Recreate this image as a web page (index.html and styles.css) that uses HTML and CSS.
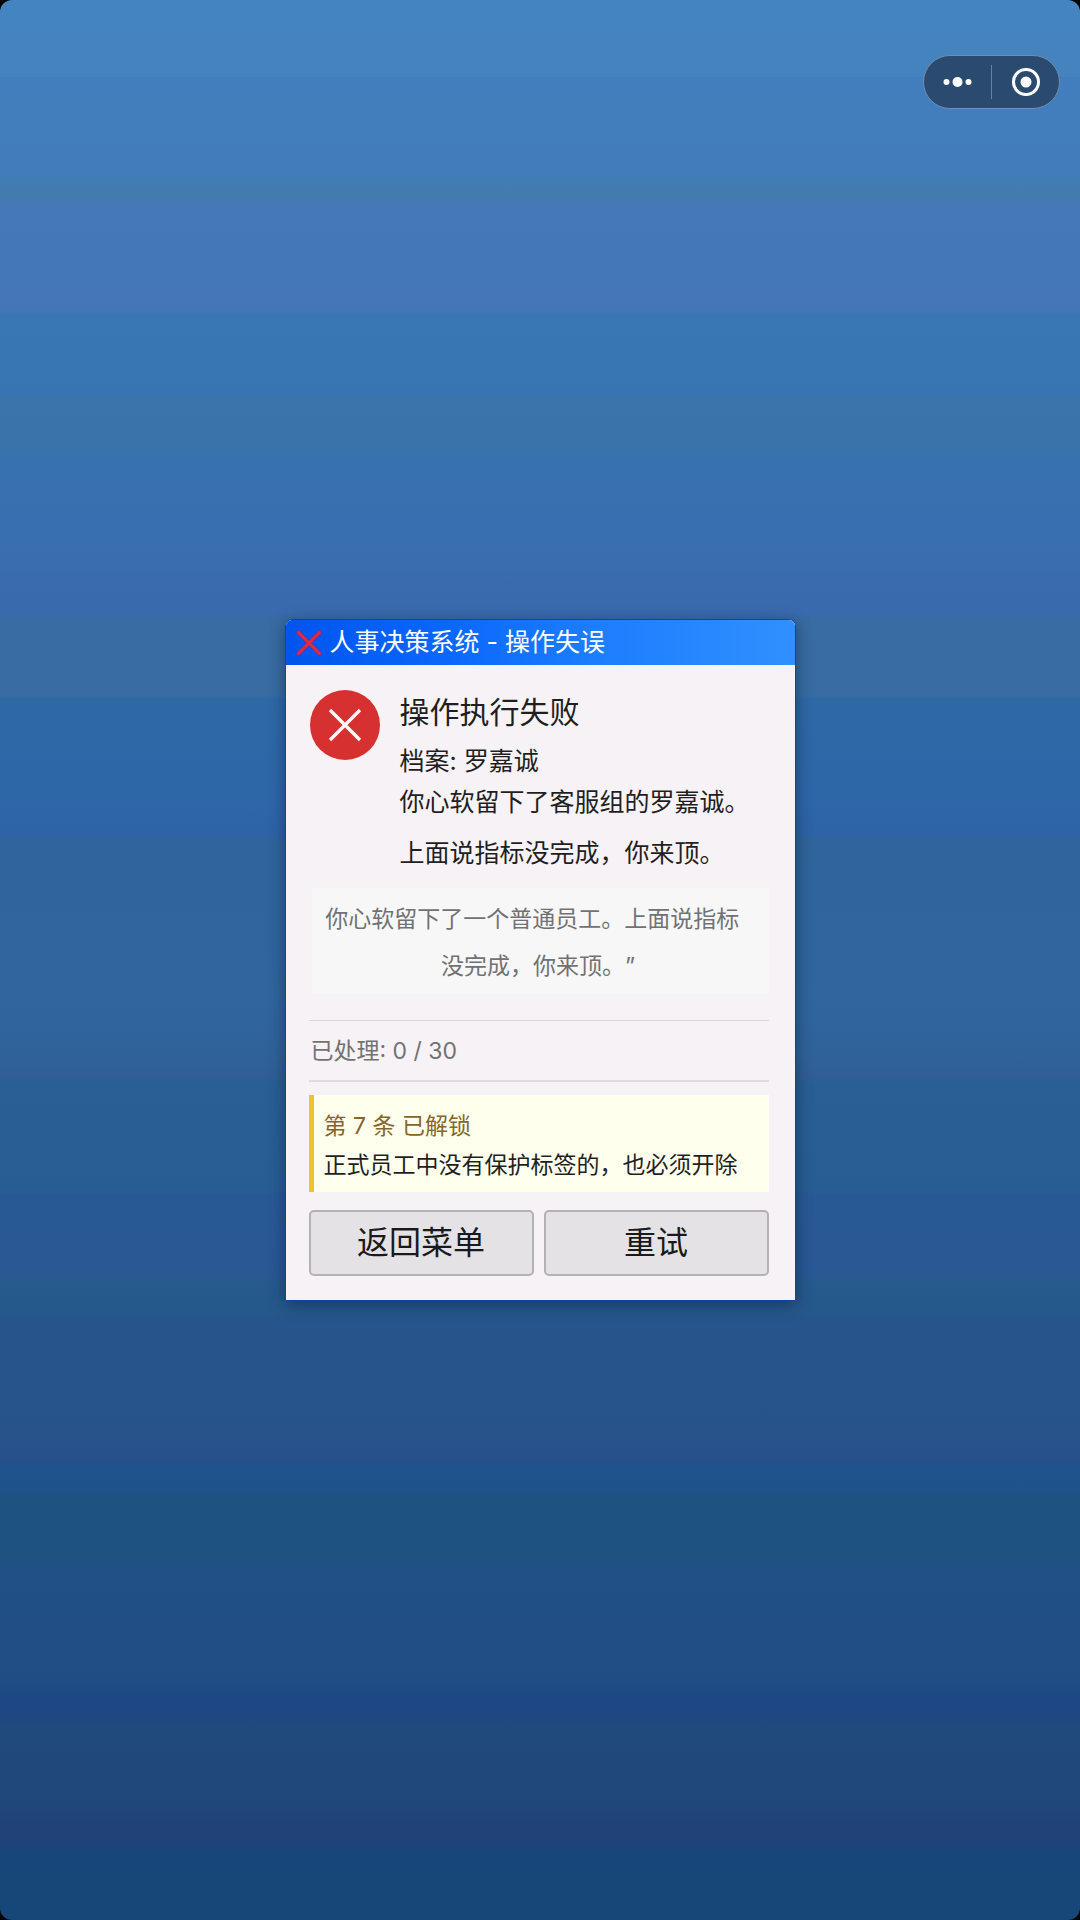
FILE: index.html
```html
<!DOCTYPE html>
<html lang="zh-CN">
<head>
<meta charset="utf-8">
<meta name="viewport" content="width=device-width, initial-scale=1">
<title>人事决策系统</title>
<link rel="stylesheet" href="styles.css">
</head>
<body>
<div class="desktop">
  <div class="capsule">
    <button class="capsule-button" type="button" aria-label="更多">
      <svg width="30" height="30" viewBox="0 0 30 30" fill="#fff"><circle cx="3.500" cy="15" r="3"/><circle cx="14.500" cy="15" r="5"/><circle cx="25.500" cy="15" r="3"/></svg>
    </button>
    <span class="capsule-divider"></span>
    <button class="capsule-button" type="button" aria-label="关闭">
      <svg width="30" height="30" viewBox="0 0 30 30"><circle cx="15" cy="15" r="12.5" fill="none" stroke="#fff" stroke-width="3"/><circle cx="15" cy="15" r="5.5" fill="#fff"/></svg>
    </button>
  </div>

  <main class="dialog" role="alertdialog" aria-labelledby="dialog-title">
    <header class="titlebar">
      <svg class="titlebar-icon" width="26" height="26" viewBox="0 0 26 26" fill="none" stroke-linecap="round"><path d="M2.5 2.5 23.5 23.5M23.5 2.5 2.5 23.5" stroke="#7a2a8c" stroke-width="4.5"/><path d="M2.5 2.5 23.5 23.5M23.5 2.5 2.5 23.5" stroke="#dd2c44" stroke-width="3"/></svg>
      <h1 class="titlebar-text" id="dialog-title">人事决策系统 - 操作失误</h1>
    </header>
    <div class="content">
      <section class="message">
        <svg class="message-icon" width="70" height="70" viewBox="0 0 70 70"><circle cx="35" cy="35" r="35" fill="#d63031"/><path d="M20 20 50 50M50 20 20 50" stroke="#fff" stroke-width="3.200"/></svg>
        <div class="message-text">
          <h2 class="message-title">操作执行失败</h2>
          <p class="line">档案: 罗嘉诚</p>
          <p class="line">你心软留下了客服组的罗嘉诚。</p>
          <p class="line line-spaced">上面说指标没完成，你来顶。</p>
        </div>
      </section>
      <blockquote class="quote">你心软留下了一个普通员工。上面说指标&ensp;<br>没完成，你来顶。”</blockquote>
      <p class="progress">已处理: 0 / 30</p>
      <section class="rule">
        <h3 class="rule-title">第 7 条 已解锁</h3>
        <p class="rule-text">正式员工中没有保护标签的，也必须开除</p>
      </section>
      <div class="actions">
        <button class="action" type="button">返回菜单</button>
        <button class="action" type="button">重试</button>
      </div>
    </div>
  </main>
</div>
</body>
</html>
```
FILE: styles.css
```css
* {
  box-sizing: border-box;
  margin: 0;
  padding: 0;
}

body {
  background: #000;
  font-family: Inter, "Noto Sans CJK SC", sans-serif;
  font-weight: 400;
  color: #1f1f22;
  text-spacing-trim: space-all;
}

h1, h2, h3, button {
  font: inherit;
}

.desktop {
  position: relative;
  display: flex;
  align-items: center;
  justify-content: center;
  min-height: 100vh;
  border-radius: 12px;
  background: linear-gradient(
    #4484c0 0%, #4483be 4%,
    #427ebd 4%, #427cbb 9%,
    #427cb2 9.500%, #427bb0 10.400%,
    #4478b7 10.600%, #4476b5 16.200%,
    #3876b4 16.400%, #3874b2 20.400%,
    #3a74aa 20.800%, #3a73a9 23.200%,
    #3871b0 24%, #386eb0 29.500%,
    #3a6bae 30.200%, #3a6aae 32%,
    #386ca2 32.200%, #386ca2 36.200%,
    #2e69a6 36.400%, #2e66a8 42%,
    #2d63a7 43.400%, #2f659c 43.800%,
    #30659e 52%, #2f6299 55%,
    #305e94 56.200%, #285f94 56.400%,
    #285d93 62%, #295995 62.200%,
    #295894 66.200%, #265a8c 67%,
    #26598b 68.400%, #26558b 68.700%,
    #27538a 75%, #284f8a 76.100%,
    #1e538d 76.300%, #1e528a 77.700%,
    #1e5381 78%, #1e5281 81.300%,
    #205086 81.700%, #204d84 87.500%,
    #1e4885 88.300%, #1e4784 89.200%,
    #20497c 90%, #20477a 94%,
    #204279 95%, #204279 96%,
    #17467a 96.400%, #174678 100%
  );
}

.capsule {
  position: absolute;
  top: 55px;
  right: 20px;
  display: flex;
  align-items: center;
  width: 137px;
  height: 54px;
  border: 1px solid #6f8fb3;
  border-radius: 27px;
  background: #2a4a70;
}

.capsule-button {
  display: flex;
  flex: 1;
  align-items: center;
  justify-content: center;
  height: 100%;
  border: 0;
  background: none;
}

.capsule-divider {
  width: 1px;
  height: 34px;
  background: #6a82a0;
}

.dialog {
  width: 511px;
  max-width: 94%;
  overflow: hidden;
  border: 1px solid #0a45a8;
  border-radius: 7px 7px 0 0;
  background: #f7f2f6;
  box-shadow: 0 4px 16px rgba(0, 20, 50, 0.45);
}

.titlebar {
  display: flex;
  align-items: center;
  gap: 8px;
  height: 45px;
  padding-left: 10px;
  background: linear-gradient(90deg, #0055ee 0%, #0a66fc 30%, #1c7dff 60%, #3090ff 100%);
  color: #fff;
}

.titlebar-text {
  font-size: 25px;
  line-height: 42px;
  padding-bottom: 2px;
}

.content {
  padding: 25px 26px 24px 23px;
}

.message {
  display: flex;
  align-items: flex-start;
  gap: 20px;
  padding-left: 1px;
}

.message-icon {
  flex: none;
}

.message-title {
  margin-bottom: 7px;
  font-size: 30px;
  line-height: 44px;
}

.line {
  font-size: 25px;
  line-height: 41px;
}

.line-spaced {
  margin-top: 10px;
}

.quote {
  margin: 14px 0 26px 3px;
  padding: 8px 4px 4px 0;
  border-radius: 4px;
  background: #f7f7f8;
  color: #727272;
  font-size: 23px;
  line-height: 47px;
  text-align: center;
}

.progress {
  border-top: 1px solid #dcd8dd;
  border-bottom: 2px solid #dfdbe0;
  padding: 1px 0 0 2px;
  color: #727272;
  font-size: 23px;
  line-height: 58px;
}

.rule {
  margin-top: 13px;
  padding: 12px 10px 7px;
  border-left: 5px solid #f4c030;
  background: #ffffee;
  font-size: 23px;
  line-height: 39px;
}

.rule-title {
  color: #856528;
}

.actions {
  display: grid;
  grid-template-columns: 1fr 1fr;
  gap: 10px;
  margin-top: 18px;
}

.action {
  height: 66px;
  border: 2px solid #b5b1b6;
  border-radius: 5px;
  background: #e5e2e6;
  color: #1a1a1c;
  font-size: 32px;
  line-height: 44px;
}
```
